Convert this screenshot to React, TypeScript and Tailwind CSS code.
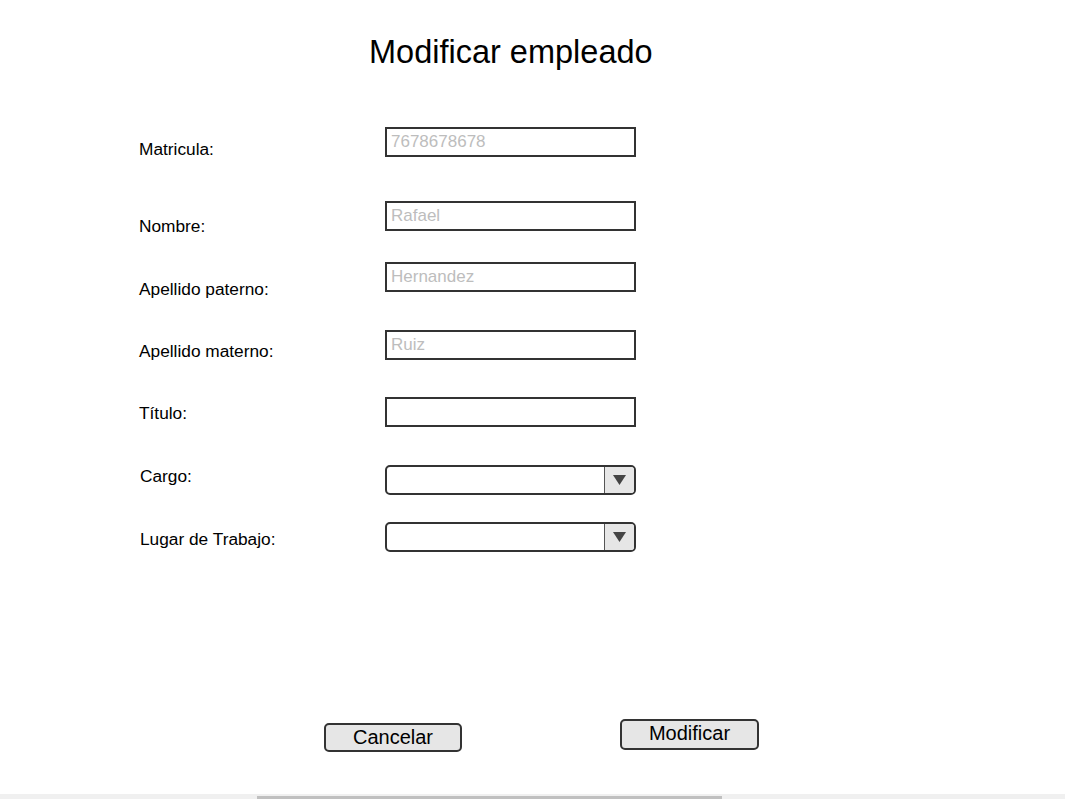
const textFields = [
    { label: "Matricula:", value: "7678678678", gap: "mt-0", labelTop: "mt-[12px]" },
    { label: "Nombre:", value: "Rafael", gap: "mt-[44px]", labelTop: "mt-[15px]" },
    { label: "Apellido paterno:", value: "Hernandez", gap: "mt-[31px]", labelTop: "mt-[17px]" },
    { label: "Apellido materno:", value: "Ruiz", gap: "mt-[38px]", labelTop: "mt-[11px]" },
    { label: "Título:", value: "", gap: "mt-[37px]", labelTop: "mt-[6px]" },
];

const selectFields = [
    { label: "Cargo:", gap: "mt-[38px]", labelTop: "mt-[1px]" },
    { label: "Lugar de Trabajo:", gap: "mt-[27px]", labelTop: "mt-[7px]" },
];

const SelectBox = () => (
    <div className="flex w-[251px] h-[30px] rounded-[5px] border-2 border-[#333] overflow-hidden bg-white">
        <div className="flex-1" />
        <div className="w-[30px] flex items-center justify-center bg-[#e6e6e6] border-l border-[#555]">
            <svg width="13" height="10" viewBox="0 0 13 10">
                <polygon points="0,0 13,0 6.5,10" fill="#444" />
            </svg>
        </div>
    </div>
);

export default function App() {
    return (
        <div className="h-[799px] flex flex-col bg-white text-black font-['Liberation_Sans',Arial,sans-serif] overflow-hidden">
            <h1 className="pl-[369px] pt-[34px] text-[32.5px] leading-[37px]">Modificar empleado</h1>

            <form className="mt-[56px] pl-[139px] flex flex-col">
                {textFields.map((f) => (
                    <div key={f.label} className={`flex items-start h-[30px] ${f.gap}`}>
                        <label className={`w-[246px] text-[17.3px] leading-[20px] ${f.labelTop}`}>{f.label}</label>
                        <input
                            type="text"
                            placeholder={f.value}
                            className="w-[251px] h-[30px] border-2 border-[#333] px-[4px] text-[17px] outline-none placeholder:text-[#bdbdbd]"
                        />
                    </div>
                ))}
                {selectFields.map((f) => (
                    <div key={f.label} className={`flex items-start h-[30px] ${f.gap}`}>
                        <label className={`w-[246px] pl-[1px] text-[17.3px] leading-[20px] ${f.labelTop}`}>{f.label}</label>
                        <SelectBox />
                    </div>
                ))}
            </form>

            <div className="mt-[167px] flex items-start pl-[324px]">
                <button className="mt-[4px] w-[138px] h-[29px] rounded-[5px] border-2 border-[#333] bg-[#e6e6e6] text-[20px] leading-[22px] pb-[2px]">
                    Cancelar
                </button>
                <button className="ml-[158px] w-[139px] h-[31px] rounded-[5px] border-2 border-[#333] bg-[#e6e6e6] text-[20px] leading-[22px] pb-[4px]">
                    Modificar
                </button>
            </div>

            <div className="mt-auto h-[5px] bg-[#f0f0f0]">
                <div className="ml-[257px] mt-[2px] w-[465px] h-[3px] bg-[#c0c0c0]" />
            </div>
        </div>
    );
}
